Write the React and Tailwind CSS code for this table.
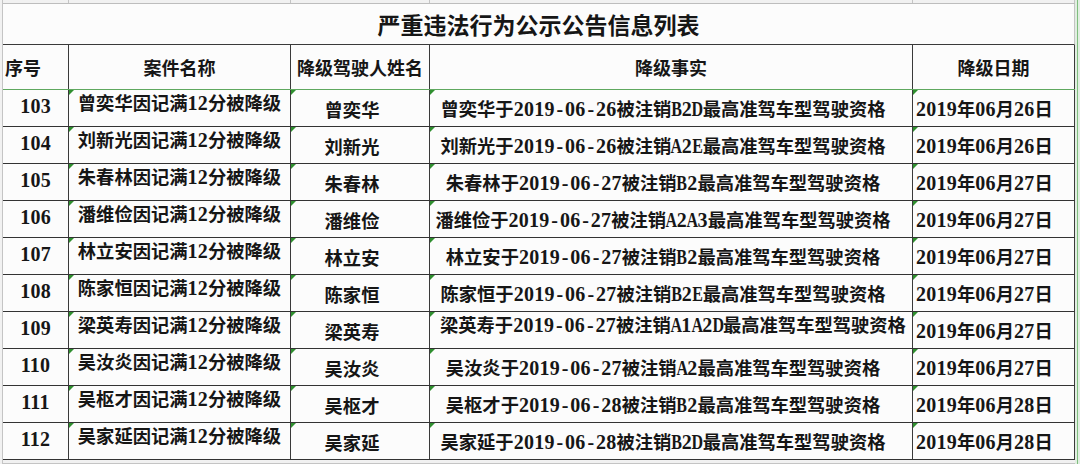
import React from "react";

const rows = [
  ["103", "曾奕华", "曾奕华于2019-06-26被注销B2D最高准驾车型驾驶资格", "2019年06月26日"],
  ["104", "刘新光", "刘新光于2019-06-26被注销A2E最高准驾车型驾驶资格", "2019年06月26日"],
  ["105", "朱春林", "朱春林于2019-06-27被注销B2最高准驾车型驾驶资格", "2019年06月27日"],
  ["106", "潘维俭", "潘维俭于2019-06-27被注销A2A3最高准驾车型驾驶资格", "2019年06月27日"],
  ["107", "林立安", "林立安于2019-06-27被注销B2最高准驾车型驾驶资格", "2019年06月27日"],
  ["108", "陈家恒", "陈家恒于2019-06-27被注销B2E最高准驾车型驾驶资格", "2019年06月27日"],
  ["109", "梁英寿", "梁英寿于2019-06-27被注销A1A2D最高准驾车型驾驶资格", "2019年06月27日"],
  ["110", "吴汝炎", "吴汝炎于2019-06-27被注销A2最高准驾车型驾驶资格", "2019年06月27日"],
  ["111", "吴枢才", "吴枢才于2019-06-28被注销B2最高准驾车型驾驶资格", "2019年06月28日"],
  ["112", "吴家延", "吴家延于2019-06-28被注销B2D最高准驾车型驾驶资格", "2019年06月28日"],
];

const font = { fontFamily: '"Noto Sans CJK SC", "Liberation Serif", sans-serif' };
const serif = { fontFamily: '"Liberation Serif", serif' };

function T({ text }) {
  const parts = [];
  let buf = "";
  let kind = null;
  const flush = () => {
    if (!buf) return;
    parts.push([kind, buf]);
    buf = "";
  };
  for (const ch of text) {
    const k = /[0-9]/.test(ch) ? "d" : ch === "-" ? "h" : /[A-Z]/.test(ch) ? "l" : "c";
    if (k !== kind || k === "h" || k === "l") {
      flush();
      kind = k;
    }
    buf += ch;
  }
  flush();
  return (
    <>
      {parts.map(([k, s], i) => {
        if (k === "d")
          return (
            <span key={i} className="text-[20px] tracking-[0.25px]" style={serif}>
              {s}
            </span>
          );
        if (k === "h")
          return (
            <span key={i} className="inline-block w-[10.4px] text-center text-[20px]" style={serif}>
              {s}
            </span>
          );
        if (k === "l")
          return (
            <span key={i} className="inline-flex w-[10.6px] justify-center text-[20px]" style={serif}>
              <span className="inline-block scale-x-[0.8]">{s}</span>
            </span>
          );
        return <span key={i}>{s}</span>;
      })}
    </>
  );
}

function Tri() {
  return (
    <span className="absolute top-0 left-0 w-0 h-0 border-t-[5px] border-t-[#2f8f2f] border-r-[5px] border-r-transparent" />
  );
}

export default function App() {
  return (
    <div
      className="w-[1080px] h-[464px] bg-[#f1f1f1] flex overflow-hidden text-[#161616] font-bold"
      style={font}
    >
      <div className="w-[3px] border-r border-r-[#c4c4c4]" />
      <div className="w-[1072px] flex flex-col">
        <div className="h-[4px] grid grid-cols-[66px_222px_139px_483px_162px] border-b border-b-[#bdbdbd]">
          <div className="border-r border-r-[#c4c4c4]" />
          <div className="border-r border-r-[#c4c4c4]" />
          <div className="border-r border-r-[#c4c4c4]" />
          <div className="border-r border-r-[#c4c4c4]" />
          <div className="border-r border-r-[#c4c4c4]" />
        </div>
        <div className="h-[41px] bg-[#fcfcfc] border-r border-r-[#c4c4c4] border-b border-b-[#3a3a3a] flex items-center justify-center text-[23px] leading-[28px]">
          严重违法行为公示公告信息列表
        </div>
        <div className="h-[45px] grid grid-cols-[66px_222px_139px_483px_162px] bg-[#fcfcfc] border-b border-b-[#5fa85f] text-[18px] leading-[22px]">
          <div className="flex items-center pl-[2px] border-r border-r-[#3a3a3a]">序号</div>
          <div className="flex items-center justify-center border-r border-r-[#3a3a3a]">案件名称</div>
          <div className="flex items-center justify-center border-r border-r-[#3a3a3a]">降级驾驶人姓名</div>
          <div className="flex items-center justify-center border-r border-r-[#3a3a3a]">降级事实</div>
          <div className="flex items-center justify-center border-r border-r-[#3a3a3a]">降级日期</div>
        </div>
        {rows.map(([no, name, fact, date]) => (
          <div
            key={no}
            className="h-[37px] grid grid-cols-[66px_222px_139px_483px_162px] bg-[#fcfcfc] border-b border-b-[#333333] text-[18.3px] leading-[22px]"
          >
            <div className="flex items-center justify-center pb-[4px] border-r border-r-[#3a3a3a]">
              <T text={no} />
            </div>
            <div className="relative flex items-start justify-center pt-[1px] border-r border-r-[#3a3a3a] whitespace-nowrap">
              <Tri />
              <span>
                <T text={name + "因记满12分被降级"} />
              </span>
            </div>
            <div className="relative flex items-center justify-center pt-[1px] pr-[16px] border-r border-r-[#3a3a3a]">
              <Tri />
              {name}
            </div>
            <div
              className={
                no === "109"
                  ? "relative flex items-start justify-start pl-[10px] pt-[1px] border-r border-r-[#3a3a3a] whitespace-nowrap"
                  : "relative flex items-center justify-center pt-[1px] pr-[16px] border-r border-r-[#3a3a3a] whitespace-nowrap"
              }
            >
              <Tri />
              <span>
                <T text={fact} />
              </span>
            </div>
            <div className="relative flex items-center justify-start pl-[3px] pt-[1px] border-r border-r-[#3a3a3a] whitespace-nowrap">
              <Tri />
              <span>
                <T text={date} />
              </span>
            </div>
          </div>
        ))}
        <div className="flex-1 border-b border-b-[#c4c4c4]" />
      </div>
      <div className="flex-1 bg-[#e2eee2] flex">
        <div className="w-[2px]" />
        <div className="w-[1px] bg-[#7fbf7f]" />
      </div>
    </div>
  );
}
